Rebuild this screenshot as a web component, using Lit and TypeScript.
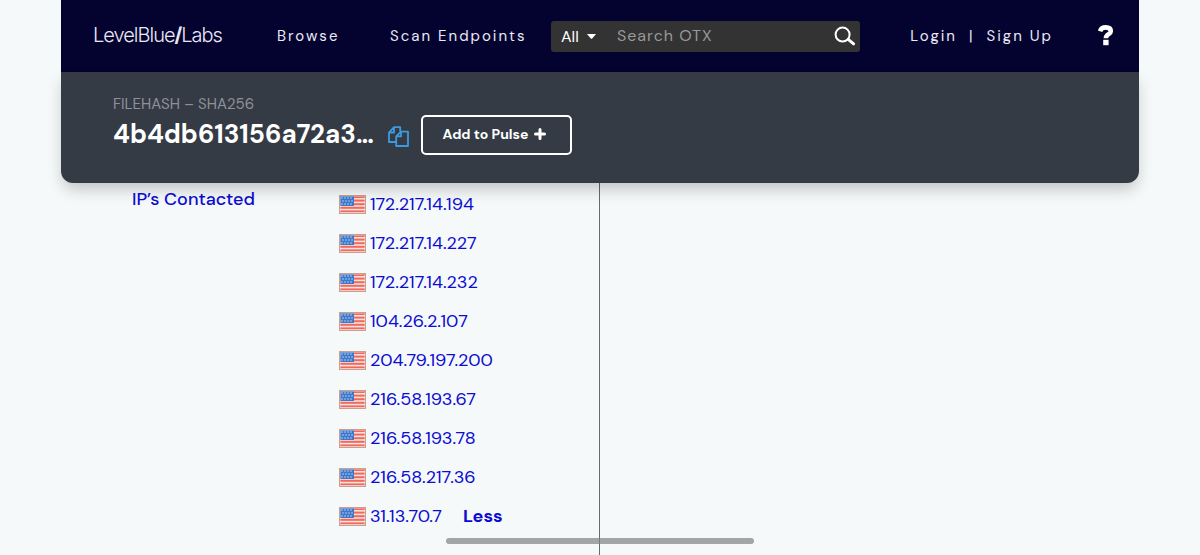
import { LitElement, html, css, svg } from "lit";
import { customElement } from "lit/decorators.js";

const ADDRESSES = [
  "172.217.14.194",
  "172.217.14.227",
  "172.217.14.232",
  "104.26.2.107",
  "204.79.197.200",
  "216.58.193.67",
  "216.58.193.78",
  "216.58.217.36",
  "31.13.70.7",
];

@customElement("us-flag")
class UsFlag extends LitElement {
  static styles = css`
    :host { display: block; width: 27px; height: 19px; }
    svg { display: block; width: 100%; height: 100%; }
  `;
  render() {
    const stripes = [1, 4.6, 8.2, 11.8, 15.4].map(
      (y) => svg`<rect x="1" y=${y} width="25" height="2" fill="#ee6a60"/>`
    );
    const stars = [3, 6, 9].flatMap((y, row) =>
      [3, 6, 9, 12].map(
        (x) => svg`<circle cx=${x + (row % 2)} cy=${y} r="0.8" fill="#b9d3f5"/>`
      )
    );
    return html`<svg viewBox="0 0 27 19" role="img" aria-label="United States">
      <rect width="27" height="19" fill="#c9a090" />
      <rect x="1" y="1" width="25" height="17" fill="#fbe2dc" />
      ${stripes}
      <rect x="1" y="1" width="14" height="10" fill="#3f78c9" />
      ${stars}
      <path d="M1.5 1.5h24v16h-24z" fill="none" stroke="#fff" stroke-opacity=".3" />
    </svg>`;
  }
}

@customElement("app-root")
class AppRoot extends LitElement {
  static styles = css`
    :host {
      display: block;
      position: relative;
      height: 100vh;
      overflow: hidden;
      background: #f5f9fa;
      font-family: "DM Sans", Inter, sans-serif;
      font-size: 16px;
      color: #fff;
    }
    * { box-sizing: border-box; }
    a { color: inherit; text-decoration: none; }
    .page {
      display: flex;
      flex-direction: column;
      min-height: 100%;
      margin: 0 61px;
    }
    .bar {
      display: flex;
      align-items: center;
      height: 72px;
      padding: 0 24px 0 32px;
      background: #04022f;
      color: #e9e9f5;
      font-size: 15px;
      letter-spacing: 2px;
    }
    .logo {
      width: 184px;
      font-family: Inter, sans-serif;
      font-size: 20px;
      font-weight: 300;
      letter-spacing: -1px;
      line-height: 24px;
      padding-bottom: 2px;
    }
    .logo b { font-weight: 700; }
    .browse { width: 113px; }
    .scan { width: 161px; white-space: nowrap; }
    .search {
      display: flex;
      align-items: center;
      width: 309px;
      height: 31px;
      padding: 0 4px 0 6px;
      border-radius: 3px;
      background: #333;
      font-size: 16px;
    }
    .pick { position: relative; display: flex; align-items: center; width: 56px; }
    select {
      appearance: none;
      width: 100%;
      border: 0;
      padding: 0 4px;
      background: none;
      color: #fff;
      font: inherit;
    }
    .caret { position: absolute; right: 17px; width: 9px; height: 5px; pointer-events: none; }
    input {
      flex: 1;
      min-width: 0;
      border: 0;
      padding: 0 4px 2px;
      background: none;
      color: #fff;
      font: inherit;
      letter-spacing: 1px;
      outline: 0;
    }
    input::placeholder { color: #999; opacity: 1; }
    button {
      border: 0;
      padding: 0;
      background: none;
      color: #fff;
      font: inherit;
      cursor: pointer;
    }
    svg { display: block; }
    .account { display: flex; gap: 12px; margin-left: auto; white-space: nowrap; }
    .help { margin-left: 44px; }
    .heading {
      display: flex;
      align-items: center;
      height: 111px;
      padding: 0 52px 8px;
      border-radius: 0 0 12px 12px;
      background: #343b45;
      box-shadow: 0 8px 16px -2px rgba(0, 0, 0, 0.22);
      z-index: 1;
    }
    .kind { margin: 0; color: #8d9299; font-size: 15px; line-height: 20px; font-weight: 400; }
    h1 { margin: 0; font-size: 26px; line-height: 40px; font-weight: 700; white-space: nowrap; }
    .title { width: 275px; }
    .copy { margin-top: 26px; }
    .pulse {
      display: flex;
      align-items: center;
      justify-content: center;
      gap: 6px;
      width: 151px;
      height: 40px;
      margin: 22px 0 0 12px;
      padding: 0 4px 2px 0;
      border: 2px solid #fff;
      border-radius: 5px;
      font-size: 14px;
      font-weight: 700;
    }
    .details {
      display: grid;
      grid-template-columns: 1fr 1fr;
      flex: 1;
      color: #0c0cd2;
      font-size: 18px;
    }
    .facts {
      display: grid;
      grid-template-columns: 207px 1fr;
      padding-left: 71px;
      border-right: 1px solid #666b70;
    }
    .label { padding-top: 4px; line-height: 24px; font-weight: 500; }
    ul { margin: 0; padding: 2px 0 0; list-style: none; }
    li { display: flex; align-items: center; gap: 4px; height: 39px; }
    li a, .less { padding-bottom: 2px; }
    .less { margin-left: 17px; color: inherit; font-weight: 700; }
    .scroller {
      position: absolute;
      left: 50%;
      bottom: 11px;
      width: 308px;
      height: 6px;
      margin-left: -154px;
      border-radius: 3px;
      background: rgba(130, 130, 130, 0.7);
    }
  `;

  render() {
    return html`
      <div class="page">
        <nav class="bar">
          <a class="logo" href="#">LevelBlue<b>/</b>Labs</a>
          <a class="browse" href="#">Browse</a>
          <a class="scan" href="#">Scan Endpoints</a>
          <form class="search" role="search">
            <div class="pick">
              <select aria-label="Search category"><option>All</option></select>
              <svg class="caret" viewBox="0 0 9 5"><path d="M0 0h9L5.2 4.4a1 1 0 0 1-1.4 0z" fill="#fff" /></svg>
            </div>
            <input type="text" aria-label="Search OTX" placeholder="Search OTX" />
            <button type="button" aria-label="Search">
              <svg width="22" height="22" viewBox="0 0 22 22" fill="none" stroke="#fff">
                <circle cx="8.6" cy="9.6" r="7" stroke-width="2" />
                <path d="M14.2 14.4 19.6 18.8" stroke-width="3" stroke-linecap="round" />
              </svg>
            </button>
          </form>
          <div class="account"><a href="#">Login</a><span>|</span><a href="#">Sign Up</a></div>
          <button class="help" type="button" aria-label="Help">
            <svg width="18" height="24" viewBox="0 0 18 24" fill="none" stroke="#fff">
              <path d="M3 7.2C4 4.4 5.8 3.4 8.6 3.4c3.2 0 5.2 1.4 5.2 3.8 0 3.2-4.9 2.8-4.9 7" stroke-width="4.6" />
              <path d="M6.2 15.8h5.4v5.4H6.2z" fill="#fff" stroke="none" />
            </svg>
          </button>
        </nav>
        <header class="heading">
          <div class="title">
            <p class="kind">FILEHASH – SHA256</p>
            <h1>4b4db613156a72a3…</h1>
          </div>
          <button class="copy" type="button" aria-label="Copy hash">
            <svg width="21" height="21" viewBox="0 0 21 21" fill="none" stroke="#3c9be0" stroke-width="1.8" stroke-linejoin="round">
              <path d="M8 16H1V6.5L6 1.2h6.2v4.4M6 1.2v5.3H1" />
              <path d="M13 5.6h7V20H8.2V10.4zM13 5.6v4.8H8.2" />
            </svg>
          </button>
          <button class="pulse" type="button">
            Add to Pulse
            <svg width="12" height="12" viewBox="0 0 12 12"><path d="M6 1.5v9M1.5 6h9" stroke="#fff" stroke-width="3" stroke-linecap="round" /></svg>
          </button>
        </header>
        <main class="details">
          <section class="facts">
            <div class="label">IP’s Contacted</div>
            <ul>
              ${ADDRESSES.map(
                (ip, i) => html`<li>
                  <us-flag></us-flag><a href="#">${ip}</a>
                  ${i === ADDRESSES.length - 1 ? html`<button class="less" type="button">Less</button>` : null}
                </li>`
              )}
            </ul>
          </section>
        </main>
      </div>
      <div class="scroller"></div>
    `;
  }
}
